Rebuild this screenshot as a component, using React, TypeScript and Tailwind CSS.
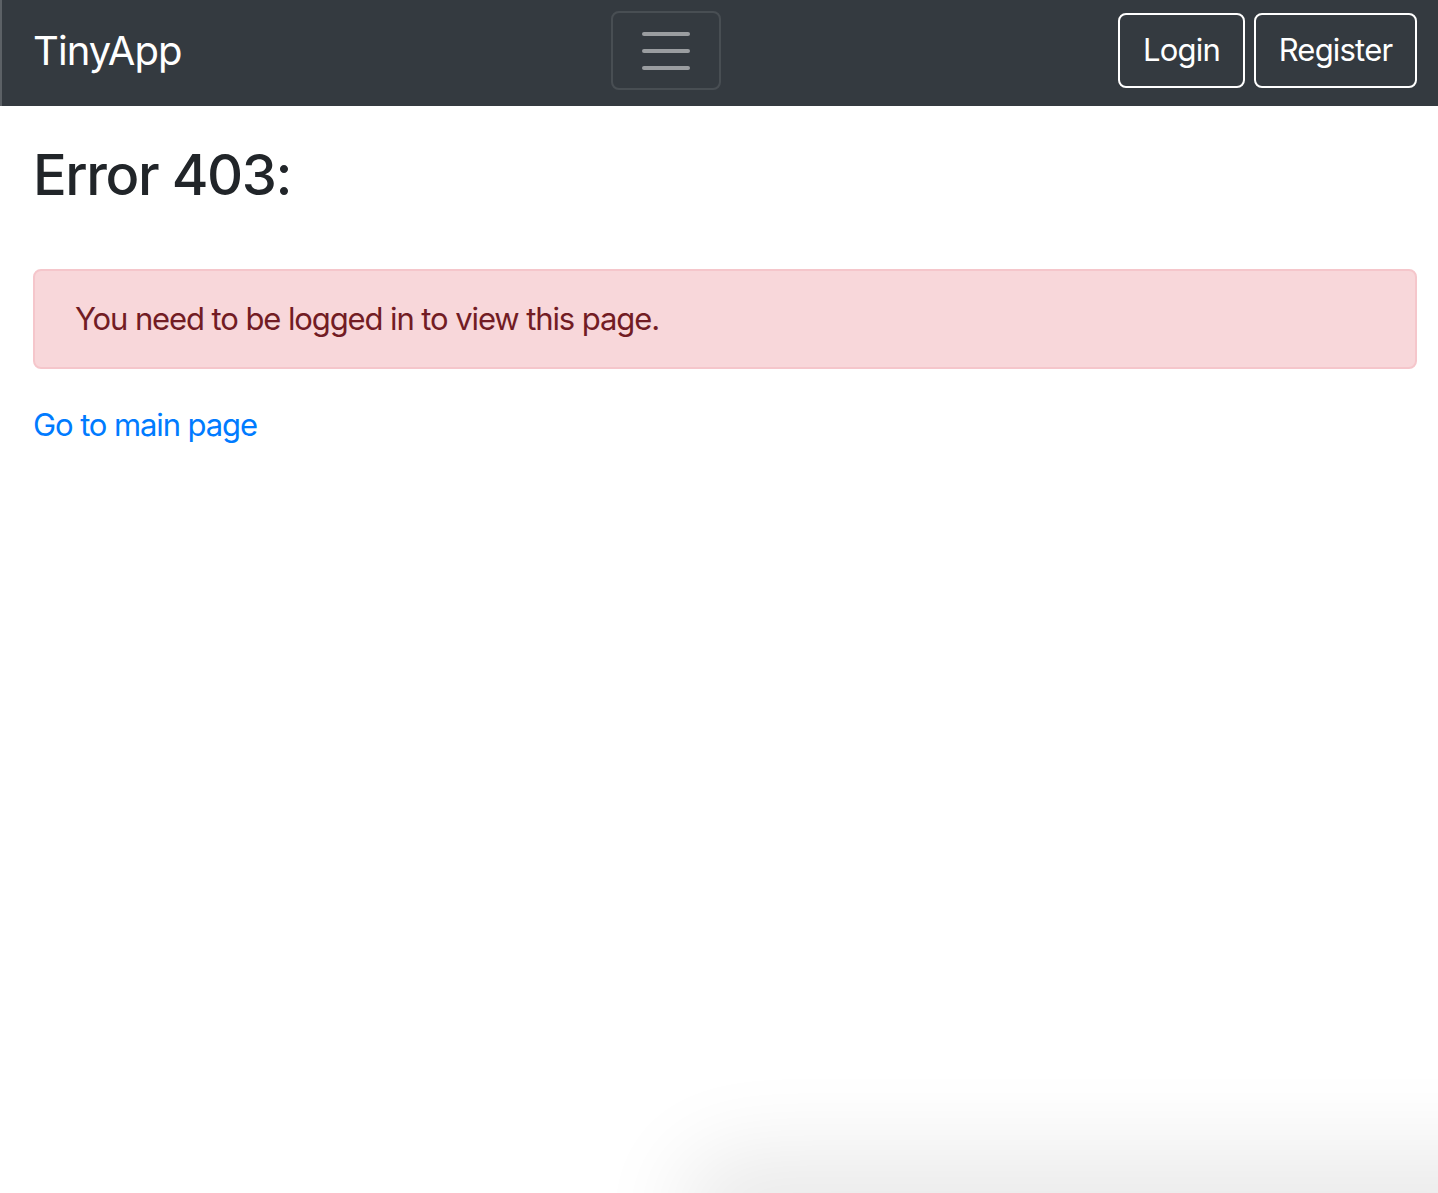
// Error page - TinyApp 403 view
const font = { fontFamily: 'Inter, "Noto Sans", "Liberation Sans", sans-serif' }

function Navbar() {
  return (
    <nav className="flex h-[106px] items-center bg-[#343a40] pb-[5px] pl-[31px] pr-[21px] border-l-2 border-[#5c6166]">
      <div className="w-[578px]">
        <a className="text-[40px] leading-none text-white tracking-[-0.9px]">TinyApp</a>
      </div>

      <button className="flex h-[79px] w-[110px] flex-col items-center justify-center gap-[13px] rounded-[8px] border-2 border-white/10">
        <span className="block h-[4px] w-[48px] rounded-full bg-white/50" />
        <span className="block h-[4px] w-[48px] rounded-full bg-white/50" />
        <span className="block h-[4px] w-[48px] rounded-full bg-white/50" />
      </button>

      <div className="ml-auto flex gap-[9px]">
        <button className="h-[75px] w-[127px] rounded-[8px] border-2 border-white text-[31px] text-white tracking-[-0.8px]">
          Login
        </button>
        <button className="h-[75px] w-[163px] rounded-[8px] border-2 border-white text-[31px] text-white tracking-[-0.8px]">
          Register
        </button>
      </div>
    </nav>
  )
}

export default function App() {
  return (
    <div className="relative h-[1193px] overflow-hidden bg-white" style={font}>
      <Navbar />

      <main className="pl-[33px] pr-[21px]">
        <h1 className="mt-[36px] text-[56px] font-medium leading-[1.2] text-[#212529] tracking-[-1.4px]">
          Error 403:
        </h1>

        <div className="mt-[60px] rounded-[8px] border-2 border-[#f5c6cb] bg-[#f8d7da] px-[40px] py-[24px] text-[31px] leading-[48px] text-[#721c24] tracking-[-1.1px]">
          You need to be logged in to view this page.
        </div>

        <a className="mt-[32px] inline-block text-[31px] leading-[48px] text-[#007bff] tracking-[-1.1px]">
          Go to main page
        </a>
      </main>

      {/* window shadow bleeding in from below */}
      <div className="pointer-events-none absolute left-[720px] right-[-100px] top-[1193px] h-[40px] rounded-[40px] shadow-[0_0_90px_40px_rgba(0,0,0,0.09)]" />
    </div>
  )
}
